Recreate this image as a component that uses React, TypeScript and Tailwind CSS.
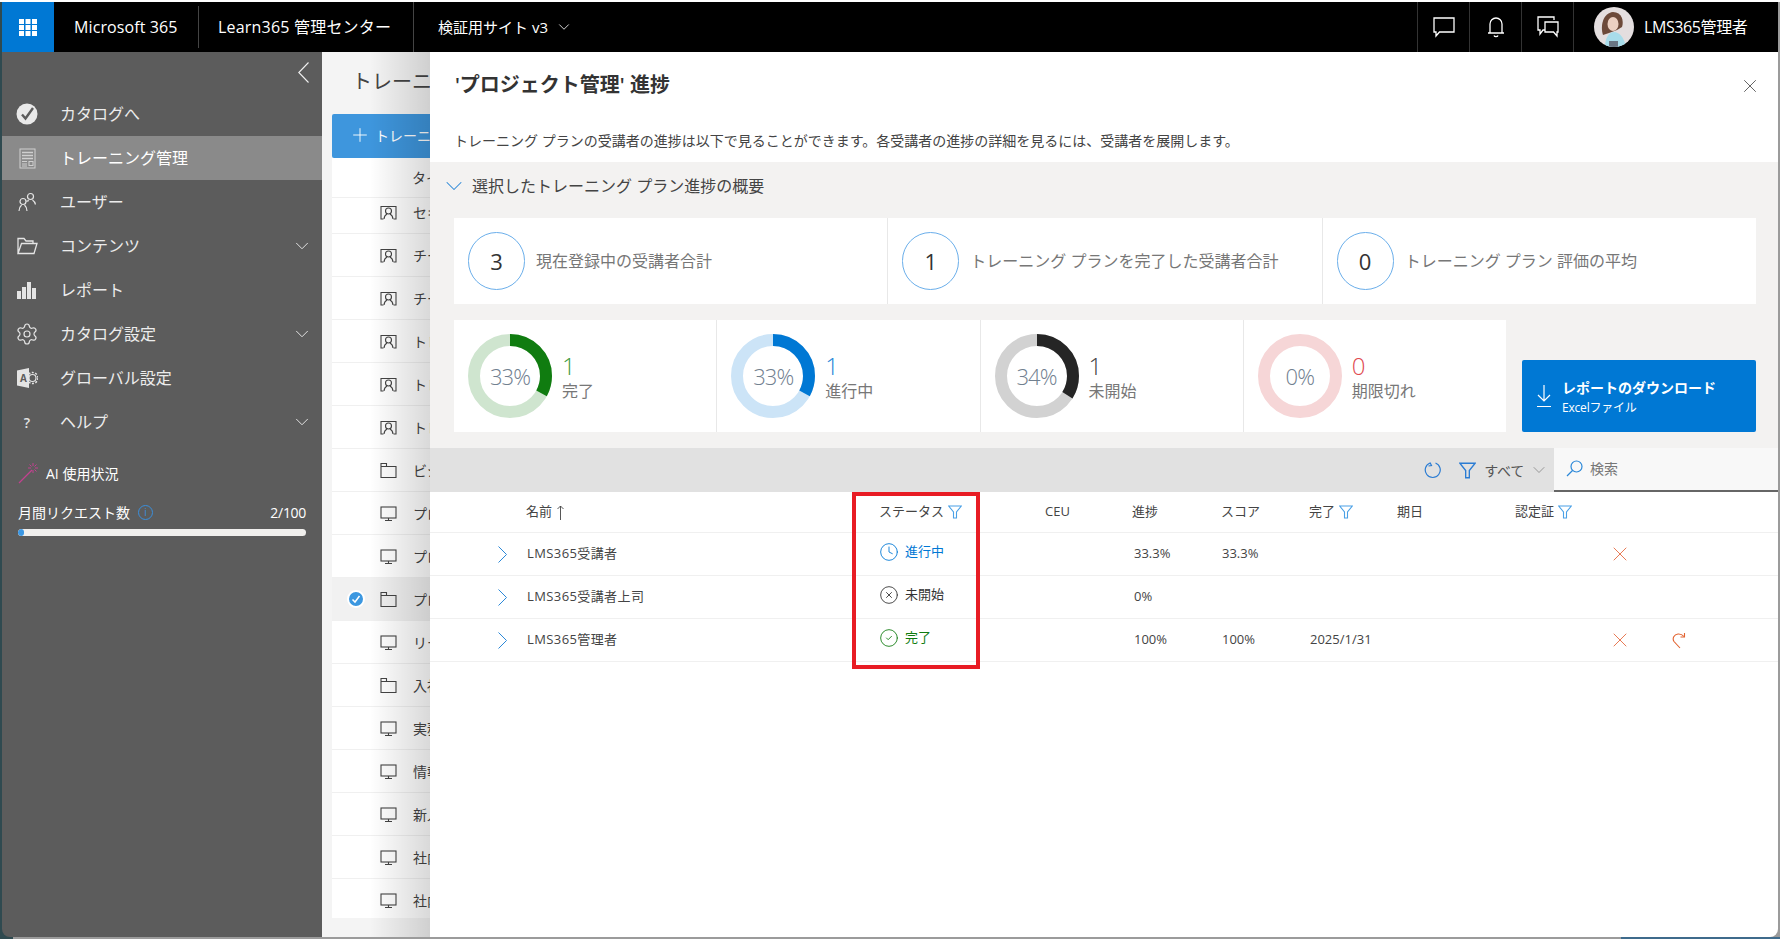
import React from "react";
import { Clock, CircleX, CircleCheck, Settings, ChevronDown, X, Plus } from "lucide-react";

const Check = () => (
  <svg width="22" height="22" viewBox="0 0 22 22">
    <circle cx="11" cy="11" r="10.5" fill="#e9e9e9" />
    <path d="M6 11.5l3.5 4L17 5" fill="none" stroke="#5c5c5c" strokeWidth="2.4" />
  </svg>
);
const Doc = () => (
  <svg width="17" height="21" viewBox="0 0 17 21" fill="none" stroke="#cfcfcf">
    <rect x="1" y="1" width="15" height="19" />
    <path d="M3 4.5h11M3 7.5h11M3 10.5h11" strokeWidth="1.5" />
    <path d="M3 13.5h5M3 16h5M3 18h5" />
    <rect x="10" y="13.5" width="4" height="4" />
  </svg>
);
const Users = () => (
  <svg width="20" height="20" viewBox="0 0 20 20" fill="none" stroke="#e4e4e4" strokeWidth="1.2">
    <circle cx="13.5" cy="4.5" r="3" />
    <circle cx="6" cy="9.5" r="3" />
    <path d="M2 19c0-3 1.5-5 2.6-6M7.5 13c1.1 1 2.5 3 2.5 6M12 8.5c-1 .4-2 .6-2.6 1M15.5 8c1.5 1 2.5 2.5 3 4.500" />
  </svg>
);
const FolderOpen = () => (
  <svg width="21" height="18" viewBox="0 0 21 18" fill="none" stroke="#e4e4e4" strokeWidth="1.3">
    <path d="M1 16.500V1.500h6l2 2.500h7v2.500M1 16.500l3.500-10H20l-3 10z" />
  </svg>
);
const Bars = () => (
  <svg width="20" height="17" viewBox="0 0 20 17" fill="#e4e4e4">
    <rect x="0" y="9" width="4" height="8" />
    <rect x="5" y="5" width="4" height="12" />
    <rect x="10" y="0" width="4" height="17" />
    <rect x="15" y="6" width="4" height="11" />
  </svg>
);
const Global = () => (
  <svg width="21" height="20" viewBox="0 0 21 20">
    <path d="M0 2.500L12 0v20L0 17.500z" fill="#e4e4e4" />
    <text x="3" y="14" fontSize="10" fontWeight="700" fill="#5c5c5c">A</text>
    <circle cx="15.500" cy="10" r="3.500" fill="none" stroke="#e4e4e4" strokeWidth="1.200" />
    <circle cx="15.500" cy="10" r="5.500" fill="none" stroke="#e4e4e4" strokeWidth="1.500" strokeDasharray="2 1.500" />
  </svg>
);
const Wand = () => (
  <svg width="22" height="22" viewBox="0 0 22 22" fill="none" stroke="#c2418f" strokeWidth="1.300">
    <path d="M1 21L14 8" />
    <path d="M15 1v3M15 8v3M10 6h3M17 6h3M11.500 2.500l2 2M18.500 2.500l-2 2M18.500 9.500l-2-2" strokeWidth="1" />
  </svg>
);
const Funnel = ({ c = "#4aa0e6", s = 14 }: { c?: string; s?: number }) => (
  <svg width={s} height={s} viewBox="0 0 14 14" fill="none" stroke={c} strokeWidth="1.100">
    <path d="M.7 1h12.600L8.500 7v6h-3V7z" />
  </svg>
);
const ScreenIcon = () => (
  <svg width="17" height="17" viewBox="0 0 17 17" fill="none" stroke="#444" strokeWidth="1.100">
    <rect x="1" y="2" width="15" height="11" />
    <path d="M8.500 13v2.500M5 15.500h7" />
  </svg>
);
const FolderIcon = () => (
  <svg width="17" height="17" viewBox="0 0 17 17" fill="none" stroke="#444" strokeWidth="1.100">
    <path d="M1 15.500V1.500h5.500v3H16v11zM6.500 4.500H1" />
  </svg>
);
const PersonIcon = () => (
  <svg width="17" height="17" viewBox="0 0 17 17" fill="none" stroke="#444" strokeWidth="1.100">
    <path d="M3.500 15H1V2.500h15V15h-2.500" />
    <circle cx="8.500" cy="7" r="3" />
    <path d="M4 15c.3-3 2-4.500 3-5M13 15c-.3-3-2-4.500-3-5" />
  </svg>
);

const NAV: [React.ReactNode, string, boolean, boolean][] = [
  [<Check />, "カタログへ", false, false],
  [<Doc />, "トレーニング管理", false, true],
  [<Users />, "ユーザー", false, false],
  [<FolderOpen />, "コンテンツ", true, false],
  [<Bars />, "レポート", false, false],
  [<Settings size={24} strokeWidth={1.2} color="#e4e4e4" />, "カタログ設定", true, false],
  [<Global />, "グローバル設定", false, false],
  [<span className="text-[14px] font-semibold text-[#e4e4e4]">?</span>, "ヘルプ", true, false],
];

const LIST: [React.ReactNode, string][] = [
  [<PersonIcon />, "セキ"],
  [<PersonIcon />, "チー"],
  [<PersonIcon />, "チー"],
  [<PersonIcon />, "トレ"],
  [<PersonIcon />, "トレ"],
  [<PersonIcon />, "トレ"],
  [<FolderIcon />, "ビジ"],
  [<ScreenIcon />, "プロ"],
  [<ScreenIcon />, "プロ"],
  [<FolderIcon />, "プロ"],
  [<ScreenIcon />, "リー"],
  [<FolderIcon />, "入社"],
  [<ScreenIcon />, "実務"],
  [<ScreenIcon />, "情報"],
  [<ScreenIcon />, "新人"],
  [<ScreenIcon />, "社内"],
  [<ScreenIcon />, "社内"],
];

const Donut = ({ pct, track, arc, num, numCls, label, last }: { pct: number; track: string; arc: string; num: string; numCls: string; label: string; last?: boolean }) => (
  <div className={`flex flex-1 items-center pl-[14px] ${last ? "" : "border-r border-[#e8e8e8]"}`}>
    <div className="grid place-items-center">
      <svg width="84" height="84" viewBox="0 0 84 84" className="[grid-area:1/1]">
        <circle cx="42" cy="42" r="36" fill="none" stroke={track} strokeWidth="12" />
        {pct > 0 && (
          <circle cx="42" cy="42" r="36" fill="none" stroke={arc} strokeWidth="12" pathLength={100} strokeDasharray={`${pct} 100`} transform="rotate(-90 42 42)" />
        )}
      </svg>
      <span className="[grid-area:1/1] text-[22px] font-light tracking-[-1px] text-[#71808f]">{pct}%</span>
    </div>
    <div className="ml-[10px] mt-[4px] flex flex-col">
      <span className={`text-[24px] font-light leading-[26px] ${numCls}`}>{num}</span>
      <span className="text-[16px] leading-[24px] text-[#777]">{label}</span>
    </div>
  </div>
);

const Stat = ({ n, label, last }: { n: string; label: string; last?: boolean }) => (
  <div className={`flex flex-1 items-center pl-[14px] ${last ? "" : "border-r border-[#e8e8e8]"}`}>
    <div className="flex h-[58px] w-[57px] items-center justify-center rounded-full border border-[#6aaeea] text-[22px] text-[#333]">{n}</div>
    <span className="ml-[11px] text-[16px] text-[#777]">{label}</span>
  </div>
);

const GRID = "grid grid-cols-[97px_352px_166px_87px_89px_88px_88px_118px_98px_59px_1fr] items-center";

const Row = ({ name, icon, status, statusCls, prog, score, date, x, redo }: { name: string; icon: React.ReactNode; status: string; statusCls: string; prog: string; score?: string; date?: string; x?: boolean; redo?: boolean }) => (
  <div className={`${GRID} h-[43px] border-b border-[#f0f0f0] text-[13px] text-[#444]`}>
    <div className="flex justify-end pr-[20px]">
      <svg width="9" height="17" viewBox="0 0 9 17" fill="none" stroke="#2b88d8" strokeWidth="1"><path d="M.5.5l8 8-8 8" /></svg>
    </div>
    <span className="tracking-[0.4px]">{name}</span>
    <div className={`flex -translate-y-[2px] items-center gap-[6px] ${statusCls}`}>
      {icon}
      <span>{status}</span>
    </div>
    <span />
    <span className="pl-[2px]">{prog}</span>
    <span className="pl-[1px]">{score}</span>
    <span className="col-span-3 pl-[1px]">{date}</span>
    <span className="-ml-[5px]">{x && <X size={24} strokeWidth={1} color="#e87a55" />}</span>
    <span>
      {redo && (
        <svg width="14" height="17" viewBox="0 0 14 16" fill="none" stroke="#e2622f" strokeWidth="1.100">
          <path d="M8 15.500L2 9C0 6 2 2 6 1.500c2-.2 4 .3 6 2.500" />
          <path d="M12.500.5V4.500H8.500" />
        </svg>
      )}
    </span>
  </div>
);

export default function App() {
  return (
    <div lang="ja" className="flex h-[939px] w-[1780px] flex-col overflow-hidden bg-[linear-gradient(90deg,#2f4a50_13px,#9b9b9b_13px)] font-['Open_Sans','Noto_Sans_CJK_JP',sans-serif]">
      <div className="h-[2px] bg-white" />
      <div className="ml-[2px] mr-[2px] flex h-[935px] flex-col overflow-hidden rounded-b-[8px]">
        {/* Header */}
        <header className="flex h-[50px] shrink-0 items-stretch bg-black text-white">
          <div className="flex w-[52px] items-center justify-center bg-[#0078d4]">
            <svg width="18" height="17" viewBox="0 0 18 17" fill="#fff">
              {[0, 6.5, 13].map((x) =>
                [0, 6, 12].map((y) => <rect key={`${x}-${y}`} x={x} y={y} width="5" height="5" />)
              )}
            </svg>
          </div>
          <div className="my-[4px] flex w-[145px] items-center border-r border-[#444] pl-[20px] text-[16px] tracking-[0.1px]">Microsoft 365</div>
          <div className="flex w-[215px] items-center border-r border-[#444] pl-[19px] text-[16px] tracking-[0.2px]">Learn365 管理センター</div>
          <div className="flex flex-1 items-center gap-[7px] pl-[24px] text-[15px]">
            <span>検証用サイト v3</span>
            <ChevronDown size={18} strokeWidth={1.1} />
          </div>
          <div className="flex w-[52px] items-center justify-center border-l border-[#333]">
            <svg width="22" height="22" viewBox="0 0 22 22" fill="none" stroke="#fff" strokeWidth="1.300">
              <path d="M1 2h20v14H6.500L3 20v-4H1z" />
            </svg>
          </div>
          <div className="flex w-[52px] items-center justify-center border-l border-[#333]">
            <svg width="18" height="22" viewBox="0 0 18 22" fill="none" stroke="#fff" strokeWidth="1.300">
              <path d="M3 17V8a6 6 0 0112 0v9M1 17h16M7 19.500c.5 1.500 3.500 1.500 4 0" />
            </svg>
          </div>
          <div className="flex w-[52px] items-center justify-center border-l border-[#333]">
            <svg width="22" height="22" viewBox="0 0 22 22" fill="none" stroke="#fff" strokeWidth="1.300">
              <path d="M17 4V1H1v13h2v4l3-4h2" />
              <path d="M8 6h13v10h-1v4l-3.500-4H8z" />
            </svg>
          </div>
          <div className="flex w-[205px] items-center border-l border-[#333] pl-[20px] text-[16px] tracking-[-0.4px]">
            <svg width="40" height="40" viewBox="0 0 40 40" className="shrink-0 rounded-full">
              <rect width="40" height="40" fill="#e4dedf" />
              <path d="M9 28c-3-9 0-22 10-23 9 0 11 9 9 15l-5 3-8 3z" fill="#6d4a3a" />
              <ellipse cx="19" cy="17" rx="5.500" ry="7" fill="#ecd0c2" />
              <path d="M11 40c0-9 4-15 9-15s10 5 12 15z" fill="#a8dcea" />
              <rect x="15" y="34" width="9" height="6" fill="#6a7684" />
            </svg>
            <span className="ml-[10px] whitespace-nowrap">LMS365管理者</span>
          </div>
        </header>

        <div className="flex min-h-0 flex-1">
          {/* Sidebar */}
          <aside className="flex w-[320px] shrink-0 flex-col bg-[#5c5c5c] text-[#ececec]">
            <div className="flex h-[40px] items-center justify-end pr-[13px]">
              <svg width="11" height="21" viewBox="0 0 11 21" fill="none" stroke="#f0f0f0" strokeWidth="1.100"><path d="M10.500.5L.8 10.500l9.700 10" /></svg>
            </div>
            {NAV.map(([icon, label, chev, active]) => (
              <div key={label} className={`flex h-[44px] items-center text-[16px] ${active ? "bg-[#8a8a8a] text-white" : ""}`}>
                <div className="flex w-[50px] justify-center">{icon}</div>
                <span className="ml-[8px] flex-1">{label}</span>
                {chev && (
                  <span className="pr-[9px]">
                    <ChevronDown size={22} strokeWidth={1} color="#eee" />
                  </span>
                )}
              </div>
            ))}
            <div className="mt-[18px] flex h-[22px] items-center pl-[16px] text-[14px] text-white">
              <Wand />
              <span className="ml-[6px]">AI 使用状況</span>
            </div>
            <div className="mt-[17px] flex h-[22px] items-center justify-between pl-[16px] pr-[16px] text-[14px] text-white">
              <span className="flex items-center">
                月間リクエスト数
                <span className="ml-[8px] flex h-[15px] w-[15px] items-center justify-center rounded-full border border-[#3a8fdc] text-[10px] text-[#3a8fdc]">i</span>
              </span>
              <span className="tracking-[-0.3px]">2/100</span>
            </div>
            <div className="ml-[16px] mr-[16px] mt-[6px] h-[7px] overflow-hidden rounded-full bg-[#f0efed]">
              <div className="h-full w-[6px] rounded-full bg-[#3b97e3]" />
            </div>
          </aside>

          {/* Behind list */}
          <div className="relative w-[108px] shrink-0 overflow-hidden bg-[#f4f4f4] pl-[10px]">
            <div className="flex h-[62px] items-center whitespace-nowrap pb-[2px] pl-[20px] text-[20px] text-[#444]">トレーニング</div>
            <div className="flex h-[44px] w-[200px] items-center rounded-[2px] bg-[#3e96dd] pb-[2px] pl-[17px] text-[14px] text-white">
              <Plus size={22} strokeWidth={1} />
              <span className="ml-[4px] whitespace-nowrap">トレーニング</span>
            </div>
            <div className="h-[760px] w-[200px] overflow-hidden bg-white text-[14px] text-[#444]">
              <div className="flex h-[40px] items-center border-b border-[#f0f0f0] pl-[80px]">
                <span className="whitespace-nowrap">タイ</span>
              </div>
              {LIST.map(([icon, t], i) => (
                <div key={i} className={`flex items-center border-b border-[#f0f0f0] ${i === 0 ? "h-[36px] pb-[6px]" : "h-[43px]"} ${i === 9 ? "bg-[#f1f1f1]" : ""}`}>
                  <div className="flex w-[48px] justify-end">
                    {i === 9 && (
                      <span className="mr-[15px] flex h-[18px] w-[18px] items-center justify-center rounded-full border-2 border-white bg-[#3b97e0]">
                        <svg width="10" height="10" viewBox="0 0 10 10" fill="none" stroke="#fff" strokeWidth="1.500"><path d="M1.500 5.500l2.500 2.500 4.500-6" /></svg>
                      </span>
                    )}
                  </div>
                  <div className="w-[33px]">{icon}</div>
                  <span className="whitespace-nowrap">{t}</span>
                </div>
              ))}
            </div>
            <div className="absolute inset-y-0 right-0 w-[60px] bg-gradient-to-r from-transparent to-black/15" />
          </div>

          {/* Panel */}
          <main className="flex min-w-0 flex-1 flex-col bg-white">
            <div className="flex justify-between pl-[25px] pr-[17px] pt-[19px]">
              <h1 className="text-[20px] font-semibold leading-[28px] text-[#333]">'プロジェクト管理' 進捗</h1>
              <span className="mt-[4px]"><X size={22} strokeWidth={1} color="#555" /></span>
            </div>
            <p className="mt-[32px] h-[31px] pl-[24px] text-[14px] leading-[20px] text-[#444]">
              トレーニング プランの受講者の進捗は以下で見ることができます。各受講者の進捗の詳細を見るには、受講者を展開します。
            </p>

            <section className="h-[286px] bg-[#f3f2f1]">
              <div className="flex h-[48px] items-center pl-[10px] text-[16px] text-[#444]">
                <ChevronDown size={28} strokeWidth={0.9} color="#2b88d8" />
                <span className="ml-[4px]">選択したトレーニング プラン進捗の概要</span>
              </div>
              <div className="ml-[24px] mr-[22px] mt-[8px] flex h-[86px] bg-white">
                <Stat n="3" label="現在登録中の受講者合計" />
                <Stat n="1" label="トレーニング プランを完了した受講者合計" />
                <Stat n="0" label="トレーニング プラン 評価の平均" last />
              </div>
              <div className="ml-[24px] mr-[22px] mt-[16px] flex h-[112px] gap-[16px]">
                <div className="flex w-[1052px] bg-white">
                  <Donut pct={33} track="#cfe5cf" arc="#107c10" num="1" numCls="text-[#3d9b3d]" label="完了" />
                  <Donut pct={33} track="#cce4f7" arc="#0078d4" num="1" numCls="text-[#1f86d8]" label="進行中" />
                  <Donut pct={34} track="#d2d2d2" arc="#252525" num="1" numCls="text-[#444]" label="未開始" />
                  <Donut pct={0} track="#f6d6d7" arc="#e0494f" num="0" numCls="text-[#e0494f]" label="期限切れ" last />
                </div>
                <div className="flex h-[72px] flex-1 items-center self-end rounded-[2px] bg-[#0078d4] pl-[14px] text-white">
                  <svg width="16" height="24" viewBox="0 0 16 24" fill="none" stroke="#fff" strokeWidth="1.200">
                    <path d="M8 1v16M2 11l6 6 6-6M1 22.500h14" />
                  </svg>
                  <div className="ml-[10px] flex flex-col pt-[4px]">
                    <span className="text-[14px] font-bold leading-[20px]">レポートのダウンロード</span>
                    <span className="text-[12px] leading-[20px] tracking-[-0.2px]">Excelファイル</span>
                  </div>
                </div>
              </div>
            </section>

            <div className="flex h-[44px] items-stretch justify-end bg-[#e1e1e1] text-[14px]">
              <div className="flex items-center text-[#555]">
                <svg width="18" height="18" viewBox="0 0 18 18" fill="none" stroke="#2b7cd3" strokeWidth="1.200">
                  <path d="M11.500 2a7.500 7.500 0 11-5.500 0M6 1.500l1.500 3-3 .5" />
                </svg>
                <span className="ml-[17px]"><Funnel c="#2b7cd3" s={17} /></span>
                <span className="ml-[8px] tracking-[-0.2px]">すべて</span>
                <span className="ml-[5px]"><ChevronDown size={20} strokeWidth={1} color="#888" /></span>
              </div>
              <div className="ml-[5px] flex w-[224px] items-center border-b-2 border-[#666] bg-[#f8f8f8] pb-[2px] pl-[12px] text-[#777]">
                <svg width="17" height="17" viewBox="0 0 17 17" fill="none" stroke="#2b88d8" strokeWidth="1.200">
                  <circle cx="10.500" cy="6.500" r="5.500" />
                  <path d="M6.500 10.500L1 16" />
                </svg>
                <span className="ml-[7px]">検索</span>
              </div>
            </div>

            <div className="relative flex-1">
              <div className={`${GRID} h-[41px] border-b border-[#f0f0f0] text-[13px] text-[#444]`}>
                <span />
                <span className="-ml-[1px] flex items-center gap-[5px]">
                  名前
                  <svg width="7" height="15" viewBox="0 0 7 15" fill="none" stroke="#444" strokeWidth="0.900"><path d="M3.500 15V1M.5 4l3-3 3 3" /></svg>
                </span>
                <span className="flex items-center gap-[4px]">ステータス<Funnel /></span>
                <span>CEU</span>
                <span>進捗</span>
                <span>スコア</span>
                <span className="flex items-center gap-[4px]">完了<Funnel /></span>
                <span>期日</span>
                <span className="flex items-center gap-[4px]">認定証<Funnel /></span>
                <span />
                <span />
              </div>
              <Row name="LMS365受講者" icon={<Clock size={20} strokeWidth={1.050} />} status="進行中" statusCls="text-[#0078d4]" prog="33.3%" score="33.3%" x />
              <Row name="LMS365受講者上司" icon={<CircleX size={20} strokeWidth={1.050} />} status="未開始" statusCls="text-[#333]" prog="0%" />
              <Row name="LMS365管理者" icon={<CircleCheck size={20} strokeWidth={1.050} />} status="完了" statusCls="text-[#107c10]" prog="100%" score="100%" date="2025/1/31" x redo />
              <div className="absolute left-[422px] top-0 h-[177px] w-[128px] border-4 border-[#e81c24]" />
            </div>
          </main>
        </div>
      </div>
      <div className="flex h-[2px] justify-end">
        <div className="w-[159px] bg-[#3f6b8c]" />
      </div>
    </div>
  );
}
